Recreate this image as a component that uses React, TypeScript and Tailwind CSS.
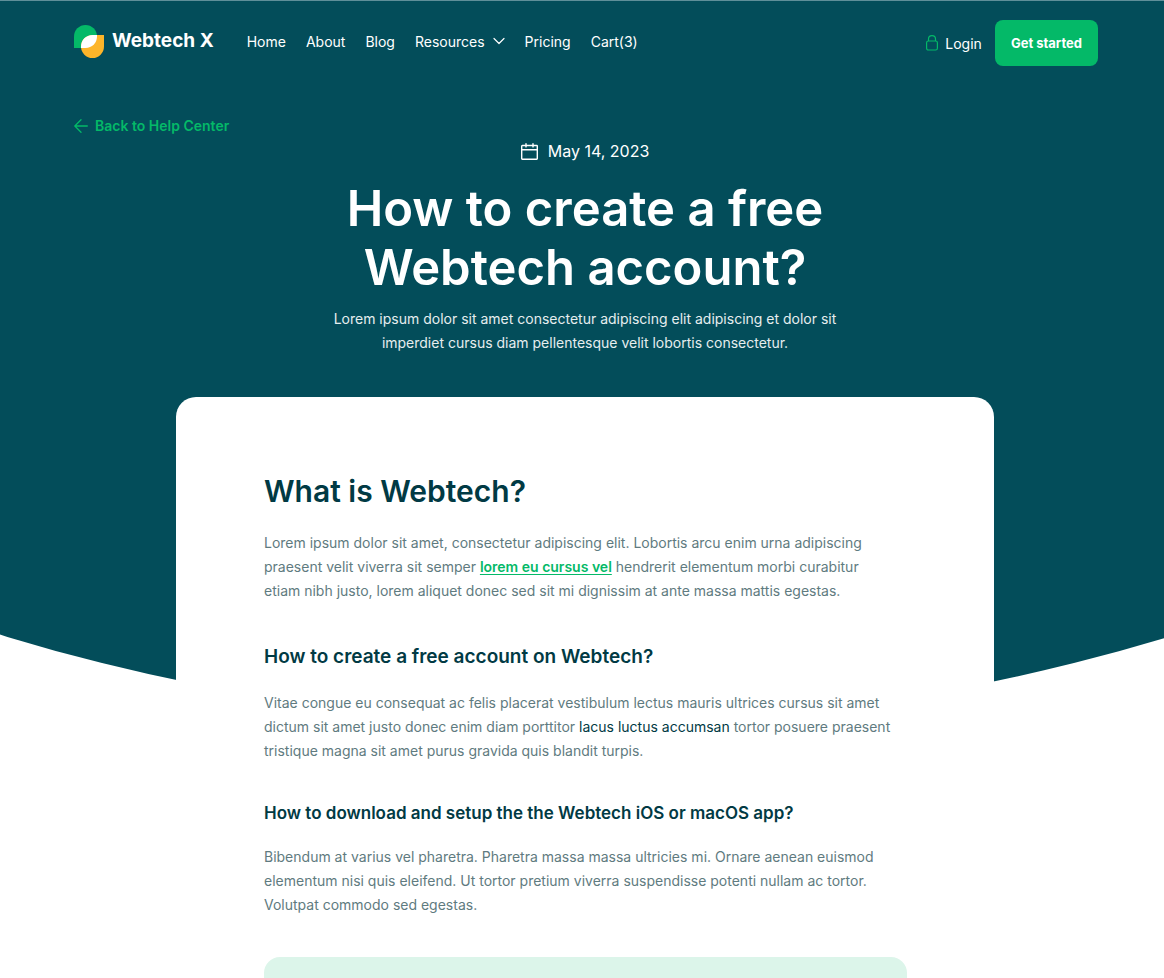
import type { ReactNode } from "react";

function Logo() {
  return (
    <svg width="30" height="33" viewBox="0 0 30 33" aria-hidden="true">
      <path d="M0 23V11.500a11.500 11.500 0 0 1 23 0V23z" fill="#04b968" />
      <path d="M30 10v11.500a11.500 11.500 0 0 1-23 0C7 15 12 10 18.500 10z" fill="#fdb52a" />
      <path d="M23 10v1.500C23 18 18 23 11.500 23H7v-1.500C7 15 12 10 18.500 10z" fill="#ffffff" />
    </svg>
  );
}

function ChevronIcon() {
  return (
    <svg width="12" height="8" viewBox="0 0 12 8" fill="none" stroke="currentColor" strokeWidth="1.200" strokeLinecap="round" strokeLinejoin="round" aria-hidden="true">
      <path d="M1 1.500 6 6.500l5-5" />
    </svg>
  );
}

function LockIcon() {
  return (
    <svg width="12" height="16" viewBox="0 0 12 16" fill="none" stroke="#04b968" strokeWidth="1.200" aria-hidden="true">
      <rect x="0.600" y="6" width="10.800" height="9" rx="1.800" />
      <path d="M2.500 6V4a3.500 3.300 0 0 1 7 0v2" />
    </svg>
  );
}

function ArrowIcon() {
  return (
    <svg width="14" height="14" viewBox="0 0 14 14" fill="none" stroke="currentColor" strokeWidth="1.300" strokeLinecap="round" strokeLinejoin="round" aria-hidden="true">
      <path d="M13.300 7H.8M7 .8.8 7 7 13.200" />
    </svg>
  );
}

function CalendarIcon() {
  return (
    <svg width="17" height="17" viewBox="0 0 17 17" fill="none" stroke="currentColor" strokeWidth="1.400" strokeLinecap="round" strokeLinejoin="round" aria-hidden="true">
      <rect x="0.700" y="2.500" width="15.600" height="13.700" rx="0.600" />
      <path d="M.7 6.800h15.600M5 .7v3.200M12 .7v3.200" />
    </svg>
  );
}

function NavLink({ children }: { children: ReactNode }) {
  return (
    <a href="#" className="flex items-center gap-2 whitespace-nowrap">
      {children}
    </a>
  );
}

function Header() {
  return (
    <header className="flex items-center justify-between pt-5 pr-[66px] pl-[74px]">
      <div className="flex items-center gap-[33px] pb-1">
        <a href="#" className="flex items-center gap-2 text-[19px] font-bold whitespace-nowrap">
          <Logo />
          Webtech X
        </a>
        <nav aria-label="Main" className="flex items-center gap-5 text-[14px]">
          <NavLink>Home</NavLink>
          <NavLink>About</NavLink>
          <NavLink>Blog</NavLink>
          <NavLink>
            Resources
            <ChevronIcon />
          </NavLink>
          <NavLink>Pricing</NavLink>
          <NavLink>Cart(3)</NavLink>
        </nav>
      </div>
      <div className="flex items-center gap-[13px]">
        <a href="#" className="flex items-center gap-[7px] text-[14px]">
          <LockIcon />
          Login
        </a>
        <button type="button" className="rounded-lg bg-[#04b968] px-4 py-[13px] text-[13px] leading-5 font-bold whitespace-nowrap">
          Get started
        </button>
      </div>
    </header>
  );
}

const copy = "text-[14px] leading-6 text-[#5f7b80]";

export default function App() {
  return (
    <div className="relative isolate min-h-screen overflow-hidden bg-white font-['Inter',sans-serif] text-white">
      <div className="absolute inset-x-0 top-0 -z-10 h-[723px] border-t border-[#5f8f99] bg-[#034d5a] [clip-path:circle(2000px_at_calc(50%+6px)_-1277px)]" />
      <Header />
      <main className="pt-[49px] pr-[66px] pl-[72px]">
        <a href="#" className="ml-0.5 inline-flex items-center gap-[7px] text-[14px] leading-5 font-semibold text-[#04b968]">
          <ArrowIcon />
          Back to Help Center
        </a>
        <div className="flex flex-col items-center text-center">
          <p className="flex items-center gap-[10px] text-[16px] leading-6">
            <CalendarIcon />
            <time dateTime="2023-05-14">May 14, 2023</time>
          </p>
          <h1 className="mt-4 text-[49px] leading-[59px] font-semibold">
            How to create a free
            <br />
            Webtech account?
          </h1>
          <p className="mt-[10px] text-[14px] leading-6 text-[#e6eeef]">
            Lorem ipsum dolor sit amet consectetur adipiscing elit adipiscing et dolor sit
            <br />
            imperdiet cursus diam pellentesque velit lobortis consectetur.
          </p>
        </div>
        <article className="mx-auto mt-[42px] max-w-[818px] rounded-t-[20px] bg-white pt-[74px] pr-[87px] pl-[88px] text-[#013a44]">
          <h2 className="text-[30px] leading-10 font-semibold">What is Webtech?</h2>
          <p className={`mt-5 ${copy}`}>
            Lorem ipsum dolor sit amet, consectetur adipiscing elit. Lobortis arcu enim urna adipiscing
            <br />
            praesent velit viverra sit semper{" "}
            <a href="#" className="font-semibold text-[#04b968] underline underline-offset-2">lorem eu cursus vel</a>
            {" "}hendrerit elementum morbi curabitur
            <br />
            etiam nibh justo, lorem aliquet donec sed sit mi dignissim at ante massa mattis egestas.
          </p>
          <h3 className="mt-10 text-[19px] leading-7 font-semibold">How to create a free account on Webtech?</h3>
          <p className={`mt-5 ${copy}`}>
            Vitae congue eu consequat ac felis placerat vestibulum lectus mauris ultrices cursus sit amet
            <br />
            dictum sit amet justo donec enim diam porttitor{" "}
            <span className="text-[#013a44]">lacus luctus accumsan</span> tortor posuere praesent
            <br />
            tristique magna sit amet purus gravida quis blandit turpis.
          </p>
          <h4 className="mt-[38px] text-[17px] leading-6 font-semibold">How to download and setup the the Webtech iOS or macOS app?</h4>
          <p className={`mt-5 ${copy}`}>
            Bibendum at varius vel pharetra. Pharetra massa massa ultricies mi. Ornare aenean euismod
            <br />
            elementum nisi quis eleifend. Ut tortor pretium viverra suspendisse potenti nullam ac tortor.
            <br />
            Volutpat commodo sed egestas.
          </p>
          <div className="mt-10 h-[21px] rounded-t-[16px] bg-[#dcf5ea]" />
        </article>
      </main>
    </div>
  );
}
